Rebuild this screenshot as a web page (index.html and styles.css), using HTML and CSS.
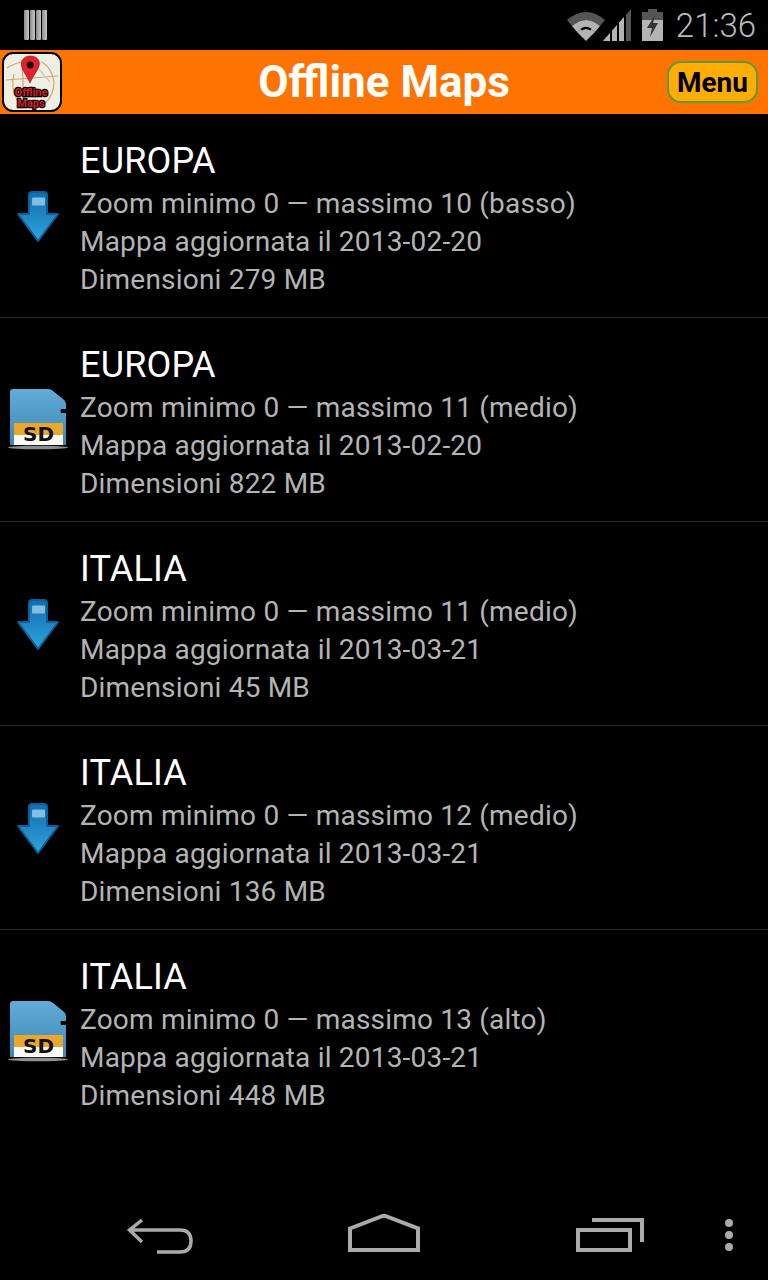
FILE: index.html
```html
<!DOCTYPE html>
<html lang="it">
<head>
    <meta charset="UTF-8">
    <meta name="viewport" content="width=device-width, initial-scale=1.0">
    <title>Offline Maps</title>
    <link rel="stylesheet" href="styles.css">
</head>
<body>

<svg class="defs" width="0" height="0">
    <defs>
        <linearGradient id="arrowFill" x1="0" y1="0" x2="0" y2="1">
            <stop offset="0" stop-color="#0f6fae"/>
            <stop offset="0.45" stop-color="#1f84c2"/>
            <stop offset="1" stop-color="#2fa6dc"/>
        </linearGradient>
        <linearGradient id="cardFill" x1="0" y1="0" x2="0" y2="1">
            <stop offset="0" stop-color="#62acd8"/>
            <stop offset="1" stop-color="#3f86b4"/>
        </linearGradient>
        <symbol id="icon-download" viewBox="0 0 76 64">
            <path d="M29 11 Q29 8 32 8 L44 8 Q47 8 47 11 L47 30 L58 30 L38 57 L18 30 L29 30 Z" fill="url(#arrowFill)" stroke="#0d5f9c" stroke-width="2" stroke-linejoin="round"/>
            <rect x="32" y="13.500" width="13" height="8" rx="1" fill="#7fbfe0"/>
        </symbol>
        <symbol id="icon-sd" viewBox="0 0 76 64">
            <ellipse cx="38" cy="59.500" rx="30" ry="1.800" fill="#8a8f92"/>
            <path d="M10 4 Q10 1 13 1 L48 1 Q51 1 53 3 L63 11 Q66 13 66 16 L66 21 L61 21 Q60 23 61 25 L66 25 L66 57 L10 57 Z" fill="url(#cardFill)"/>
            <rect x="14" y="35" width="49" height="12" fill="#e9a82a"/>
            <rect x="14" y="47" width="49" height="10" fill="#fbfbf6"/>
            <text x="38.500" y="53" class="sd-label">SD</text>
        </symbol>
    </defs>
</svg>

<div class="status-bar">
    <div class="notif-icon">
        <span></span><span></span><span></span><span></span>
    </div>
    <div class="status-right">
        <svg class="wifi" width="40" height="32" viewBox="0 0 40 32">
            <path d="M1 11 Q20 -5 39 11 L34 17 Q20 5 6 17 Z" fill="#555"/>
            <path d="M6 17 Q20 5 34 17 L29 23 Q20 15 11 23 Z" fill="#b4b4b4"/>
            <path d="M11 23 Q20 15 29 23 L20 32 Z" fill="#b4b4b4"/>
            <path d="M14.500 19.800 Q20 15.500 25.500 19.800 L24 21.500 Q20 18.500 16 21.500 Z" fill="#000"/>
        </svg>
        <svg class="signal" width="28" height="32" viewBox="0 0 28 32">
            <path d="M0 32 L28 0 L28 32 Z" fill="#555"/>
            <path d="M0 32 L21 8 L21 32 Z" fill="#b4b4b4"/>
            <rect x="7" y="0" width="2" height="32" fill="#000"/>
            <rect x="14" y="0" width="2" height="32" fill="#000"/>
            <rect x="21" y="0" width="2" height="32" fill="#000"/>
        </svg>
        <svg class="battery" width="21" height="32" viewBox="0 0 21 32">
            <rect x="6" y="0" width="9" height="3" fill="#555"/>
            <rect x="0" y="3" width="21" height="9" fill="#555"/>
            <rect x="0" y="11" width="21" height="21" fill="#b4b4b4"/>
            <path d="M13 6 L5 19 L10 19 L8 28 L16 14 L11 14 Z" fill="#333"/>
        </svg>
        <span class="clock">21:36</span>
    </div>
</div>

<div class="action-bar">
    <div class="logo">
        <svg width="60" height="60" viewBox="0 0 60 60">
            <rect x="1" y="1" width="58" height="58" rx="10" fill="#eef0e4"/>
            <path d="M5 16 Q14 10 26 9 M40 10 Q50 16 52 30 Q52 44 42 52 M12 22 Q8 36 16 50 M4 28 L56 24 M20 8 L22 54" fill="none" stroke="#e0a070" stroke-width="1.200"/>
            <path d="M34 14 L48 30 M30 44 L46 40" stroke="#c8d0c0" stroke-width="1.500" fill="none"/>
            <path d="M28.500 4 C21 4 18.500 10 19.500 14 C20.500 19 25.500 25 28 31 C30.500 25 35.500 19 37 14 C38.500 10 36 4 28.500 4 Z" fill="#e3202c" stroke="#8a1018" stroke-width="0.600"/>
            <circle cx="28.200" cy="13" r="3.500" fill="#111"/>
            <text x="29" y="44" class="logo-text">Offline</text>
            <text x="29" y="55" class="logo-text">Maps</text>
            <rect x="1" y="1" width="58" height="58" rx="10" fill="none" stroke="#000" stroke-width="2"/>
        </svg>
    </div>
    <div class="app-title">Offline Maps</div>
    <button type="button" class="menu-btn">Menu</button>
</div>

<div class="map-list">
    <div class="map-row">
        <svg class="row-icon"><use href="#icon-download"/></svg>
        <div class="row-text">
            <div class="row-title">EUROPA</div>
            <div class="row-line">Zoom minimo 0 — massimo 10 (basso)</div>
            <div class="row-line">Mappa aggiornata il 2013-02-20</div>
            <div class="row-line">Dimensioni 279 MB</div>
        </div>
    </div>
    <div class="map-row">
        <svg class="row-icon"><use href="#icon-sd"/></svg>
        <div class="row-text">
            <div class="row-title">EUROPA</div>
            <div class="row-line">Zoom minimo 0 — massimo 11 (medio)</div>
            <div class="row-line">Mappa aggiornata il 2013-02-20</div>
            <div class="row-line">Dimensioni 822 MB</div>
        </div>
    </div>
    <div class="map-row">
        <svg class="row-icon"><use href="#icon-download"/></svg>
        <div class="row-text">
            <div class="row-title">ITALIA</div>
            <div class="row-line">Zoom minimo 0 — massimo 11 (medio)</div>
            <div class="row-line">Mappa aggiornata il 2013-03-21</div>
            <div class="row-line">Dimensioni 45 MB</div>
        </div>
    </div>
    <div class="map-row">
        <svg class="row-icon"><use href="#icon-download"/></svg>
        <div class="row-text">
            <div class="row-title">ITALIA</div>
            <div class="row-line">Zoom minimo 0 — massimo 12 (medio)</div>
            <div class="row-line">Mappa aggiornata il 2013-03-21</div>
            <div class="row-line">Dimensioni 136 MB</div>
        </div>
    </div>
    <div class="map-row last">
        <svg class="row-icon"><use href="#icon-sd"/></svg>
        <div class="row-text">
            <div class="row-title">ITALIA</div>
            <div class="row-line">Zoom minimo 0 — massimo 13 (alto)</div>
            <div class="row-line">Mappa aggiornata il 2013-03-21</div>
            <div class="row-line">Dimensioni 448 MB</div>
        </div>
    </div>
</div>

<div class="nav-bar">
    <svg class="nav-back" width="66" height="36" viewBox="0 0 66 36">
        <path d="M15 2 L2.500 12 L15 24 M3 12 L53 12 Q64 12 64 23 Q64 34 53 34 L30 34" fill="none" stroke="#aaa" stroke-width="3.500"/>
    </svg>
    <svg class="nav-home" width="72" height="38" viewBox="0 0 72 38">
        <path d="M2 14.500 L36 1.500 L70 14.500 L70 36 L2 36 Z" fill="none" stroke="#aaa" stroke-width="4"/>
    </svg>
    <svg class="nav-recent" width="68" height="34" viewBox="0 0 68 34">
        <rect x="2" y="12" width="52" height="20" fill="none" stroke="#aaa" stroke-width="4"/>
        <path d="M16 2 L66 2 L66 24" fill="none" stroke="#aaa" stroke-width="4"/>
    </svg>
    <svg class="nav-more" width="10" height="34" viewBox="0 0 10 34">
        <circle cx="5" cy="5" r="4" fill="#aaa"/>
        <circle cx="5" cy="17" r="4" fill="#aaa"/>
        <circle cx="5" cy="29" r="4" fill="#aaa"/>
    </svg>
</div>

</body>
</html>
```

FILE: styles.css
```css
body {
    font-family: Roboto, "Liberation Sans", sans-serif;
    background-color: #000;
    margin: 0;
    padding: 0;
    color: #fff;
    width: 768px;
    height: 1280px;
    display: flex;
    flex-direction: column;
    overflow: hidden;
}

.defs {
    display: block;
    height: 0;
}

.status-bar {
    height: 50px;
    display: flex;
    align-items: center;
    justify-content: space-between;
    padding: 0 12px 0 24px;
}

.notif-icon {
    display: flex;
    gap: 1px;
    height: 30px;
}

.notif-icon span {
    width: 5px;
    background: linear-gradient(to right, #8c8c8c, #c8c8c8);
    border-radius: 1px;
}

.status-right {
    display: flex;
    align-items: center;
}

.wifi {
    margin-right: -3px;
}

.signal {
    margin-right: 11px;
}

.battery {
    margin-right: 13px;
}

.clock {
    font-size: 33px;
    font-weight: 300;
    color: #bbb;
}

.action-bar {
    height: 64px;
    background-color: #ff7300;
    display: grid;
    grid-template-columns: 1fr auto 1fr;
    align-items: center;
    padding: 0 2px;
}

.logo {
    height: 60px;
    justify-self: start;
}

.app-title {
    font-size: 44px;
    font-weight: bold;
    color: #fff;
}

.menu-btn {
    justify-self: end;
    width: 91px;
    height: 42px;
    margin-right: 8px;
    padding: 0;
    background-color: #ffad00;
    border: 2px solid #5f9a3d;
    border-radius: 14px;
    font-family: Roboto, "Liberation Sans", sans-serif;
    font-size: 28px;
    font-weight: bold;
    color: #000;
}

.logo-text {
    font-family: Roboto, "Liberation Sans", sans-serif;
    font-size: 11px;
    font-weight: bold;
    text-anchor: middle;
    fill: #d81c28;
    stroke: #000;
    stroke-width: 2.500px;
    paint-order: stroke;
}

.sd-label {
    font-family: "DejaVu Sans", sans-serif;
    font-size: 20px;
    font-weight: bold;
    text-anchor: middle;
    fill: #111;
}

.map-list {
    flex: 1;
}

.map-row {
    height: 203px;
    display: flex;
    align-items: center;
    border-bottom: 1px solid #2a2a2a;
}

.map-row.last {
    border-bottom: none;
}

.row-icon {
    width: 76px;
    height: 64px;
    flex-shrink: 0;
    margin-right: 4px;
}

.row-text {
    padding-top: 6px;
}

.row-title {
    font-size: 36px;
    letter-spacing: 0.2px;
    line-height: 47px;
    color: #fff;
}

.row-line {
    font-size: 28px;
    letter-spacing: 0.2px;
    line-height: 38px;
    color: #b4b4b4;
}

.nav-bar {
    height: 96px;
    display: flex;
    align-items: flex-start;
    padding-left: 127px;
}

.nav-back {
    margin-top: 34px;
}

.nav-home {
    margin-top: 30px;
    margin-left: 155px;
}

.nav-recent {
    margin-top: 34px;
    margin-left: 156px;
}

.nav-more {
    margin-top: 34px;
    margin-left: 80px;
}
```
